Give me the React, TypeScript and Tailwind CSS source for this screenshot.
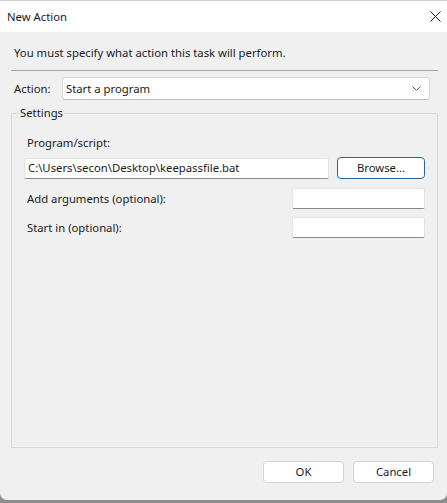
import React from 'react';

// "New Action" task dialog, Windows 11 style
const TextBox: React.FC<{ value?: string; className?: string }> = ({ value, className }) => (
  <div
    className={`h-[21px] bg-white border border-[#e3e3e3] border-b-[#8a8a8a] rounded-[2px] flex items-center px-[3px] ${className ?? ''}`}
  >
    {value && <span className="whitespace-nowrap">{value}</span>}
  </div>
);

const DialogButton: React.FC<{ label: string; focused?: boolean; className?: string }> = ({ label, focused, className }) => (
  <button
    className={`h-[22px] bg-white rounded-[4px] border flex items-center justify-center ${
      focused ? 'border-[#2c6591] bg-[#fdfdfd]' : 'border-[#d4d4d4]'
    } ${className ?? ''}`}
  >
    {label}
  </button>
);

export default function App() {
  return (
    <div
      className="w-[447px] h-[503px] bg-[#8e8e8e] text-[11.3px] leading-[16px] text-[#1b1b1b] overflow-hidden"
      style={{ fontFamily: '"Noto Sans", "Open Sans", sans-serif' }}
    >
      <div className="h-[500px] bg-[#f0f0f0] rounded-b-[7px] flex flex-col border-t border-[#cfcfcf]">
        {/* title bar */}
        <div className="h-[31px] bg-white flex items-center justify-between pl-[7px] pr-[6px]">
          <span>New Action</span>
          <svg width="11" height="11" viewBox="0 0 11 11">
            <path d="M0.5 0.5 L10.5 10.5 M10.5 0.5 L0.5 10.5" stroke="#1b1b1b" strokeWidth="1" fill="none" />
          </svg>
        </div>

        <div className="px-[11px] flex flex-col">
          <p className="pl-[3px] mt-[13px]">You must specify what action this task will perform.</p>
          <div className="h-px bg-[#a6a6a6] mt-[9px] mr-[-2px]" />

          <div className="flex items-center mt-[6px]">
            <span className="pl-[3px] w-[51px]">Action:</span>
            <div className="w-[368px] h-[23px] bg-white border border-[#d9d9d9] border-b-[#bcbcbc] rounded-[3px] flex items-center justify-between pl-[3px] pr-[8px]">
              <span>Start a program</span>
              <svg width="9" height="5" viewBox="0 0 9 5">
                <path d="M0.5 0.5 L4.5 4.5 L8.5 0.5" stroke="#606060" strokeWidth="1" fill="none" />
              </svg>
            </div>
          </div>

          <fieldset className="mt-[5px] h-[343px] border border-[#d9d9d9] mr-[-1px]">
            <legend className="ml-[7px] px-[1px]">Settings</legend>
            <div className="px-[12px] pt-[14px] flex flex-col">
              <span className="pl-[3px]">Program/script:</span>
              <div className="flex items-center mt-[6px]">
                <TextBox value="C:\Users\secon\Desktop\keepassfile.bat" className="w-[305px]" />
                <DialogButton label="Browse..." focused className="w-[88px] ml-[8px]" />
              </div>
              <div className="flex items-center justify-between mt-[9px]">
                <span className="pl-[3px]">Add arguments (optional):</span>
                <TextBox className="w-[133px]" />
              </div>
              <div className="flex items-center justify-between mt-[8px]">
                <span className="pl-[3px]">Start in (optional):</span>
                <TextBox className="w-[133px]" />
              </div>
            </div>
          </fieldset>

          <div className="flex justify-end gap-[9px] mt-[13px] mr-[2px]">
            <DialogButton label="OK" className="w-[81px]" />
            <DialogButton label="Cancel" className="w-[81px]" />
          </div>
        </div>
      </div>
    </div>
  );
}
